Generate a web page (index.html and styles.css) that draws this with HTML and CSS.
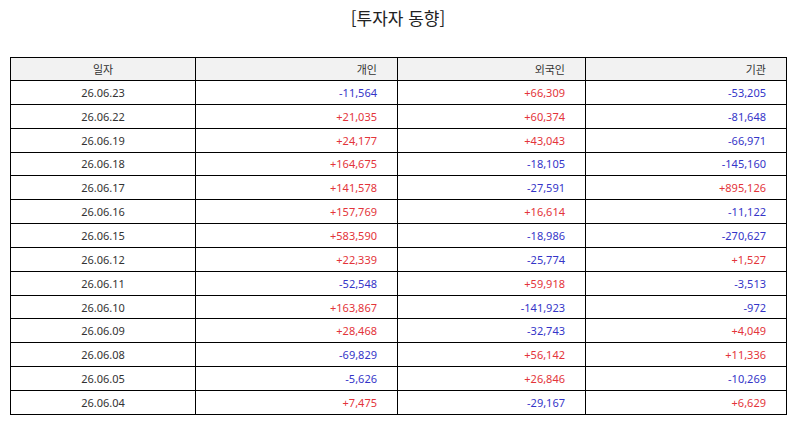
FILE: index.html
```html
<!DOCTYPE html>
<html lang="ko">
<head>
<meta charset="utf-8">
<title>투자자 동향</title>
<link rel="stylesheet" href="styles.css">
</head>
<body>
<div class="page">
  <h1 class="title">[투자자 동향]</h1>
  <table class="grid">
    <colgroup>
      <col class="c1"><col class="c2"><col class="c3"><col class="c4">
    </colgroup>
    <thead>
      <tr><th class="center">일자</th><th>개인</th><th>외국인</th><th>기관</th></tr>
    </thead>
    <tbody>
      <tr><td class="center">26.06.23</td><td class="dn">-11,564</td><td class="up">+66,309</td><td class="dn">-53,205</td></tr>
      <tr><td class="center">26.06.22</td><td class="up">+21,035</td><td class="up">+60,374</td><td class="dn">-81,648</td></tr>
      <tr><td class="center">26.06.19</td><td class="up">+24,177</td><td class="up">+43,043</td><td class="dn">-66,971</td></tr>
      <tr><td class="center">26.06.18</td><td class="up">+164,675</td><td class="dn">-18,105</td><td class="dn">-145,160</td></tr>
      <tr><td class="center">26.06.17</td><td class="up">+141,578</td><td class="dn">-27,591</td><td class="up">+895,126</td></tr>
      <tr><td class="center">26.06.16</td><td class="up">+157,769</td><td class="up">+16,614</td><td class="dn">-11,122</td></tr>
      <tr><td class="center">26.06.15</td><td class="up">+583,590</td><td class="dn">-18,986</td><td class="dn">-270,627</td></tr>
      <tr><td class="center">26.06.12</td><td class="up">+22,339</td><td class="dn">-25,774</td><td class="up">+1,527</td></tr>
      <tr><td class="center">26.06.11</td><td class="dn">-52,548</td><td class="up">+59,918</td><td class="dn">-3,513</td></tr>
      <tr><td class="center">26.06.10</td><td class="up">+163,867</td><td class="dn">-141,923</td><td class="dn">-972</td></tr>
      <tr><td class="center">26.06.09</td><td class="up">+28,468</td><td class="dn">-32,743</td><td class="up">+4,049</td></tr>
      <tr><td class="center">26.06.08</td><td class="dn">-69,829</td><td class="up">+56,142</td><td class="up">+11,336</td></tr>
      <tr><td class="center">26.06.05</td><td class="dn">-5,626</td><td class="up">+26,846</td><td class="dn">-10,269</td></tr>
      <tr><td class="center">26.06.04</td><td class="up">+7,475</td><td class="dn">-29,167</td><td class="up">+6,629</td></tr>
    </tbody>
  </table>
</div>
</body>
</html>
```

FILE: styles.css
```css
html, body {
  margin: 0;
  padding: 0;
  background: #fff;
}

.page {
  padding: 7px 8px 0 10px;
  font-family: "Noto Sans", "Noto Sans CJK KR", sans-serif;
  color: #333;
}

.title {
  margin: 0 0 29px 0;
  font-family: "Noto Sans CJK KR", "Noto Sans", sans-serif;
  font-size: 17px;
  line-height: 21px;
  font-weight: 400;
  color: #222;
  text-align: center;
}

.grid {
  border-collapse: collapse;
  table-layout: fixed;
  width: 776px;
  font-size: 11px;
}

.c1 { width: 185px; }
.c2 { width: 202px; }
.c3 { width: 188px; }
.c4 { width: 201px; }

.grid th,
.grid td {
  border: 1px solid #000;
  padding: 0 20px 0 4px;
  text-align: right;
  font-weight: 400;
  white-space: nowrap;
  vertical-align: middle;
}

.grid th {
  height: 22px;
  background: #f2f2f2;
  color: #333;
  font-family: "Noto Sans CJK KR", "Noto Sans", sans-serif;
}

.grid td {
  height: 22.85px;
}

.grid .center {
  text-align: center;
  padding: 0;
}

.up { color: #e3343a; }
.dn { color: #3535c8; }
```
